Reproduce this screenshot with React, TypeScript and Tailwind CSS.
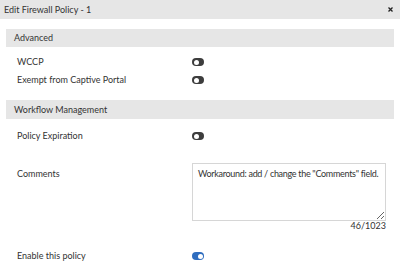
import { useState } from 'react';

const Toggle = ({ on }: { on: boolean }) => (
  <span
    className={`relative inline-block h-[8px] w-[12px] rounded-full ${on ? 'bg-[#2f6dbf]' : 'bg-[#3d3d3d]'}`}
  >
    <span
      className={`absolute top-[1.5px] h-[5px] w-[5px] rounded-full bg-white ${on ? 'right-[1.5px]' : 'left-[1.5px]'}`}
    />
  </span>
);

const SectionBar = ({ title, className }: { title: string; className: string }) => (
  <div className={`flex items-center bg-[#e6e6e6] pl-[8px] text-[#333] ${className}`}>{title}</div>
);

const Row = ({ label, on, className }: { label: string; on: boolean; className?: string }) => (
  <div className={`flex h-[18px] items-center ${className ?? ''}`}>
    <span className="w-[186px] pl-[11px]">{label}</span>
    <Toggle on={on} />
  </div>
);

export default function App() {
  const [comment, setComment] = useState('Workaround: add / change the "Comments" field.');

  return (
    <div className="h-[268px] w-[400px] overflow-hidden bg-white font-['Lato','Open_Sans',sans-serif] text-[9px] text-[#333]">
      <div className="flex h-[19px] items-center justify-between bg-[#e6e6e6] pl-[4px] pr-[7px]">
        <span>Edit Firewall Policy - 1</span>
        <svg width="5" height="5" viewBox="0 0 10 10">
          <path d="M1 1 L9 9 M9 1 L1 9" stroke="#222" strokeWidth="2.6" />
        </svg>
      </div>

      <div className="px-[6px]">
        <SectionBar title="Advanced" className="mt-[10px] h-[18px]" />
        <Row label="WCCP" on={false} className="mt-[6px]" />
        <Row label="Exempt from Captive Portal" on={false} />

        <SectionBar title="Workflow Management" className="mt-[11px] h-[19px]" />
        <Row label="Policy Expiration" on={false} className="mt-[8px]" />

        <div className="mt-[18px] flex">
          <span className="w-[186px] pl-[11px] pt-[4px]">Comments</span>
          <div className="flex w-[194px] flex-col">
            <textarea
              className="h-[58px] w-full resize-y border border-[#d6d6d6] px-[5px] pt-[4px] text-[9px] leading-[12px] tracking-[-0.3px] text-[#333] outline-none"
              value={comment}
              onChange={(e) => setComment(e.target.value)}
            />
            <span className="h-[9px] text-right leading-[9px]">{comment.length}/1023</span>
          </div>
        </div>

        <Row label="Enable this policy" on className="mt-[17px]" />
      </div>
    </div>
  );
}
